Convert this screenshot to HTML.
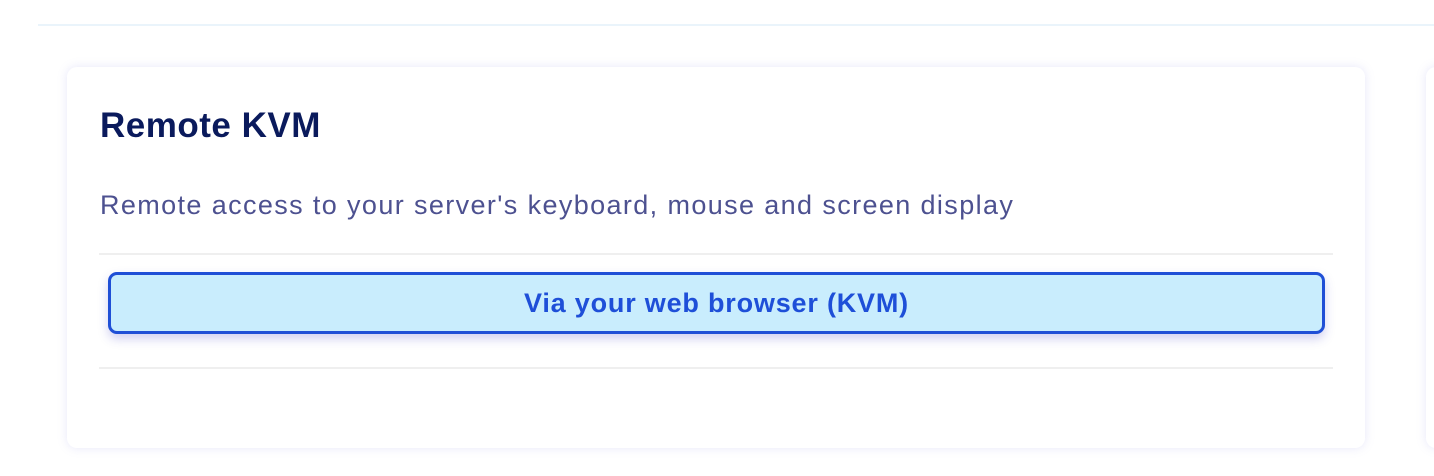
<!DOCTYPE html>
<html><head><meta charset="utf-8"><style>
html,body{margin:0;padding:0;width:1434px;height:476px;background:#fff;overflow:hidden;font-family:"Liberation Sans",sans-serif;position:relative}
.topline{position:absolute;left:38px;right:0;top:24px;height:2px;background:#eaf4fb}
.card{position:absolute;left:67px;top:67px;width:1298px;height:381px;background:#fff;border-radius:10px;box-shadow:0 0 10px rgba(120,120,220,0.18)}
.card2{position:absolute;left:1426px;top:67px;width:200px;height:381px;background:#fff;border-radius:10px;box-shadow:0 0 10px rgba(120,120,220,0.18)}
h1{position:absolute;left:33px;top:39px;margin:0;font-size:35px;font-weight:bold;color:#0a1a5c;line-height:40px;letter-spacing:0.5px}
p{position:absolute;left:33px;top:121px;margin:0;font-size:27px;color:#4d5190;line-height:34px;letter-spacing:1.38px;white-space:nowrap}
.hr{position:absolute;left:32px;width:1234px;height:2px;background:#efefef}
.btn{position:absolute;left:41px;top:205px;width:1211px;height:56px;border:3px solid #1f4fd6;border-radius:9px;background:#c9edfd;box-shadow:0 5px 10px rgba(70,70,200,0.25);color:#1e4fd8;font-weight:bold;font-size:27px;line-height:56px;text-align:center;letter-spacing:0.8px}
</style></head><body>
<div class="topline"></div>
<div class="card">
<h1>Remote KVM</h1>
<p>Remote access to your server's keyboard, mouse and screen display</p>
<div class="hr" style="top:186px"></div>
<div class="btn">Via your web browser (KVM)</div>
<div class="hr" style="top:300px"></div>
</div>
<div class="card2"></div>
</body></html>
